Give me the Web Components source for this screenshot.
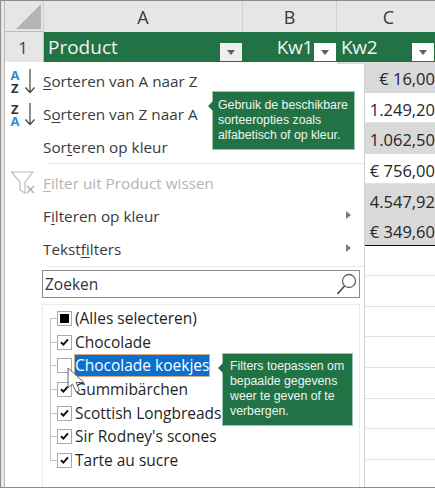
<!DOCTYPE html>
<html>
<head>
<meta charset="utf-8">
<style>
  html, body { margin: 0; background: #fff; }
  body { width: 435px; height: 488px; overflow: hidden; font-family: "Open Sans", "Noto Sans", sans-serif; }
</style>
</head>
<body>
<xl-sheet></xl-sheet>
<script>
class XlCol extends HTMLElement {
    constructor(){
        super();
        this.attachShadow({mode:"open"}).innerHTML = `
        <style>
            :host { display: flex; align-items: center; justify-content: center; background: #e6e6e6;
                    border-right: 1px solid #cfcfcf; box-sizing: border-box; color: #3a3a3a; font-size: 18px; }
        </style><slot></slot>`;
    }
}
customElements.define("xl-col", XlCol);

class XlHead extends HTMLElement {
    constructor(){
        super();
        this.attachShadow({mode:"open"}).innerHTML = `
        <style>
            :host { display: flex; align-items: center; background: #217346; color: #f2f2f2; font-size: 19px; letter-spacing: -0.3px;
                    box-sizing: border-box; padding-left: 4px; position: relative; }
            :host([soft]) { letter-spacing: 0; }
            :host([right]) { justify-content: flex-end; padding: 0 24px 0 0; }
            #drop { position: absolute; right: 1px; bottom: 1px; width: 22px; height: 18px; background: #fff;
                    display: flex; align-items: center; justify-content: center; }
            :host([soft]) #drop { background: #efefef; }
            #drop i { width: 0; height: 0; border: 4px solid transparent; border-top: 5px solid #5f5f5f; border-bottom: 0; }
        </style><slot></slot><div id="drop"><i></i></div>`;
    }
}
customElements.define("xl-head", XlHead);

class XlCell extends HTMLElement {
    constructor(){
        super();
        this.attachShadow({mode:"open"}).innerHTML = `
        <style>
            :host { display: flex; align-items: center; justify-content: flex-end; box-sizing: border-box; white-space: nowrap;
                    overflow: hidden; font-size: 16.5px; color: #262626; border-bottom: 1px solid #e2e2e2; padding: 4px 0 0 0; }
            :host([shade]) { background: #d9d9d9; border-bottom-color: #d9d9d9; }
            :host([last]) { border-bottom: 1px solid #111; }
        </style><slot></slot>`;
    }
}
customElements.define("xl-cell", XlCell);

class XlItem extends HTMLElement {
    constructor(){
        super();
        this.attachShadow({mode:"open"}).innerHTML = `
        <style>
            :host { display: flex; align-items: center; height: 33px; font-size: 15.3px; color: #3b3b3b; white-space: nowrap; position: relative; }
            :host([off]) { color: #b4b4b4; }
            #ico { width: 36px; height: 33px; flex: none; }
            #txt { flex: 1; }
            #more { display: none; width: 0; height: 0; border: 4px solid transparent; border-left: 5px solid #7a7a7a; border-right: 0;
                    position: absolute; right: 13px; top: 12px; }
            :host([more]) #more { display: block; }
            ::slotted(u) { text-underline-offset: 2px; }
        </style>
        <div id="ico"><slot name="icon"></slot></div><div id="txt"><slot></slot></div><div id="more"></div>`;
    }
}
customElements.define("xl-item", XlItem);

class XlCheck extends HTMLElement {
    constructor(){
        super();
        this.attachShadow({mode:"open"}).innerHTML = `
        <style>
            :host { display: flex; align-items: center; height: 23.6px; font-size: 15.5px; color: #1f1f1f; white-space: nowrap; }
            #box { width: 15px; height: 15px; box-sizing: border-box; border: 1px solid #a9a9a9; background: #fff; flex: none;
                   display: flex; align-items: center; justify-content: center; margin-right: 2px; position: relative; }
            #box::before { content: ""; position: absolute; left: -8px; top: 6px; width: 8px; height: 1px; background: #c4c4c4; }
            #mark { display: none; }
            :host([on]) #mark { display: block; }
            #sq { display: none; width: 9px; height: 9px; background: #000; }
            :host([mixed]) #sq { display: block; }
            #lab { padding: 0 1px; height: 23px; line-height: 22px; box-sizing: border-box; }
            :host([sel]) #lab { background: #0a6fd0; color: #fff; border: 1px solid #d9a77c; line-height: 21px; padding: 0; }
        </style>
        <div id="box">
          <svg id="mark" width="11" height="11" viewBox="0 0 11 11"><path d="M2 5.2 L4.400 7.600 L9 2.400" fill="none" stroke="#111" stroke-width="2"/></svg>
          <div id="sq"></div>
        </div>
        <div id="lab"><slot></slot></div>`;
    }
}
customElements.define("xl-check", XlCheck);

class XlTip extends HTMLElement {
    constructor(){
        super();
        this.attachShadow({mode:"open"}).innerHTML = `
        <style>
            :host { display: block; position: absolute; box-sizing: border-box; background: #217346; color: #eef5f0;
                    border: 1px solid #9fc5ae; font: 12.3px/15px "Liberation Sans", Arial, sans-serif; }
            #arrow { position: absolute; left: -5px; top: 9px; width: 0; height: 0;
                     border: 5px solid transparent; border-right: 5px solid #217346; border-left: 0; }
        </style><div id="arrow"></div><slot></slot>`;
    }
}
customElements.define("xl-tip", XlTip);

class XlMenu extends HTMLElement {
    constructor(){
        super();
        this.attachShadow({mode:"open"}).innerHTML = `
        <style>
            :host { display: block; position: absolute; left: 6px; top: 63px; width: 358px; height: 425px; box-sizing: border-box;
                    background: #fff; border-right: 1px solid #d2d2d2; }
            .sep { height: 1px; background: #e8e8e8; margin: 0 0 0 40px; }
            svg { display: block; }
            svg text { font-family: "Open Sans", sans-serif; font-weight: 700; font-size: 13px; }
            #search { margin: 3px 0 0 35px; width: 318px; height: 28px; box-sizing: border-box; border: 1px solid #8a8a8a;
                      display: flex; align-items: center; justify-content: space-between; padding: 0 1px 0 2px;
                      font-size: 15.5px; color: #333; }
            #list { margin: 6px 0 0 35px; width: 318px; height: 183px; box-sizing: border-box; border: 1px solid #ececec; border-bottom: 0;
                    padding: 2px 0 0 14px; position: relative; }
            #trunk { position: absolute; left: 7px; top: 13px; width: 1px; height: 142px; background: #c4c4c4; }
        </style>
        <xl-item>
          <svg slot="icon" width="36" height="33" viewBox="0 0 36 33">
            <text x="3.500" y="16" fill="#2a8fd8">A</text><text x="4" y="29" fill="#333">Z</text>
            <path d="M23 5V28M18.500 23.500L23 28.500L27.500 23.500" fill="none" stroke="#444" stroke-width="1.2"/>
          </svg>
          <u>S</u>orteren van A naar Z</xl-item>
        <xl-item>
          <svg slot="icon" width="36" height="33" viewBox="0 0 36 33">
            <text x="4" y="17" fill="#333">Z</text><text x="3.500" y="29" fill="#2a8fd8">A</text>
            <path d="M23 6V27M18.500 22.500L23 27.500L27.500 22.500" fill="none" stroke="#444" stroke-width="1.2"/>
          </svg>
          S<u>o</u>rteren van Z naar A</xl-item>
        <xl-item>Sor<u>t</u>eren op kleur</xl-item>
        <div class="sep"></div>
        <xl-item off style="margin-top:2px">
          <svg slot="icon" width="36" height="33" viewBox="0 0 36 33">
            <path d="M4.500 6H26L18 16V27L13 24V16Z" fill="#fff" stroke="#bdbdbd" stroke-width="1.2"/>
            <path d="M20 20L27 27M27 20L20 27" stroke="#a8a8a8" stroke-width="1.2"/>
          </svg>
          <u>F</u>ilter uit Product wissen</xl-item>
        <xl-item more>F<u>i</u>lteren op kleur</xl-item>
        <xl-item more>Tekst<u>f</u>ilters</xl-item>
        <div class="sep" style="margin-top:1px"></div>
        <div id="search">Zoeken
          <svg width="23" height="24" viewBox="0 0 23 24"><circle cx="14" cy="9" r="6.500" fill="none" stroke="#666" stroke-width="1.3"/><path d="M9.500 14L2.500 22" stroke="#555" stroke-width="1.8"/></svg>
        </div>
        <div id="list">
          <div id="trunk"></div>
          <xl-check mixed><b style="font-weight:500">(Alles selecteren)</b></xl-check>
          <xl-check on>Chocolade</xl-check>
          <xl-check sel>Chocolade koekjes</xl-check>
          <xl-check on>Gummibärchen</xl-check>
          <xl-check on>Scottish Longbreads</xl-check>
          <xl-check on>Sir Rodney's scones</xl-check>
          <xl-check on>Tarte au sucre</xl-check>
        </div>`;
    }
}
customElements.define("xl-menu", XlMenu);

class XlSheet extends HTMLElement {
    constructor(){
        super();
        this.attachShadow({mode:"open"}).innerHTML = `
        <style>
            :host { display: block; position: relative; width: 435px; height: 488px; box-sizing: border-box; overflow: hidden;
                    border-top: 1px solid #8c8c8c; border-left: 1px solid #8c8c8c; border-bottom: 1px solid #8c8c8c; }
            #grid { display: grid; grid-template-columns: 4px 39px 199px 94px 98px; grid-template-rows: 31px 30px repeat(14, 30.6px); }
            #edge { grid-row: 1 / 17; background: #e6e6e6; border-right: 1px solid #bdbdbd; box-sizing: border-box; }
            #corner { background: #e6e6e6; border-right: 1px solid #cfcfcf; border-bottom: 1px solid #bdbdbd; box-sizing: border-box; position: relative; }
            #corner i { position: absolute; right: 2px; bottom: 2px; width: 0; height: 0; border-left: 25px solid transparent; border-bottom: 25px solid #b4b4b4; }
            #num { background: #e6e6e6; display: flex; align-items: center; justify-content: center; font-size: 16.5px; color: #444;
                   border-right: 1px solid #bdbdbd; box-sizing: border-box; padding-right: 2px; }
            #blank { grid-column: 2 / 5; grid-row: 3 / 17; }
            #tip1 { left: 211px; top: 90px; width: 143px; height: 59px; padding: 6px 0 0 5px; }
            #tip2 { left: 221px; top: 352px; width: 131px; height: 73px; padding: 5px 0 0 7px; }
            #cursor { position: absolute; left: 66px; top: 366px; }
        </style>
        <div id="grid">
          <div id="edge"></div>
          <div id="corner"><i></i></div>
          <xl-col>A</xl-col><xl-col>B</xl-col><xl-col style="border-right:0;padding-left:5px">C</xl-col>
          <div id="num">1</div>
          <xl-head soft>Product</xl-head>
          <xl-head right>Kw1</xl-head>
          <xl-head>Kw2</xl-head>
          <div id="blank"></div>
          <xl-cell shade>€ 16,00</xl-cell>
          <xl-cell>€ 1.249,20</xl-cell>
          <xl-cell shade>€ 1.062,50</xl-cell>
          <xl-cell>€ 756,00</xl-cell>
          <xl-cell shade>€ 4.547,92</xl-cell>
          <xl-cell shade last>€ 349,60</xl-cell>
          <xl-cell></xl-cell><xl-cell></xl-cell><xl-cell></xl-cell><xl-cell></xl-cell>
          <xl-cell></xl-cell><xl-cell></xl-cell><xl-cell></xl-cell><xl-cell></xl-cell>
        </div>
        <xl-menu></xl-menu>
        <xl-tip id="tip1">Gebruik de beschikbare<br>sorteeropties zoals<br>alfabetisch of op kleur.</xl-tip>
        <xl-tip id="tip2">Filters toepassen om<br>bepaalde gegevens<br>weer te geven of te<br>verbergen.</xl-tip>
        <svg id="cursor" width="20" height="28" viewBox="0 0 20 28">
          <path d="M1 1V21L5.500 17L9 25L12.500 23.500L9 15.500H17Z" fill="#fff" stroke="#666" stroke-width="1"/>
        </svg>`;
    }
}
customElements.define("xl-sheet", XlSheet);
</script>
</body>
</html>
